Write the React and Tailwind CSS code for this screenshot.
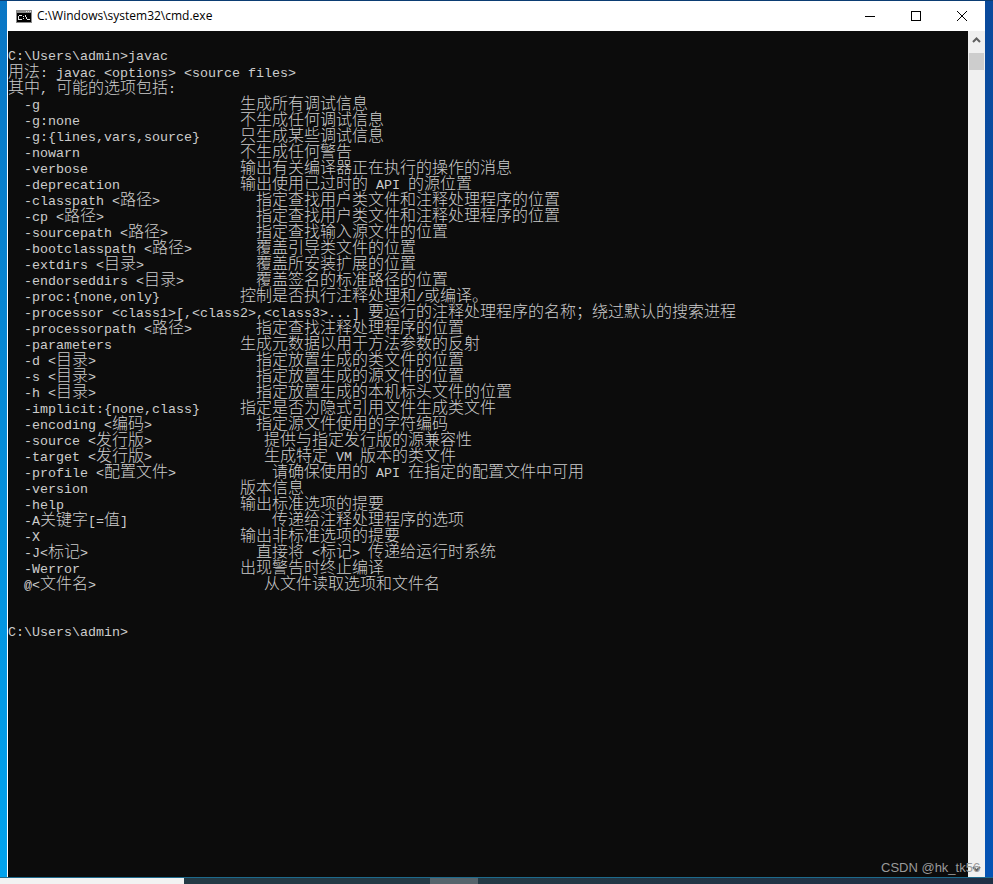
import React from "react";

const rows = [
  ["-g", 29, "生成所有调试信息"],
  ["-g:none", 29, "不生成任何调试信息"],
  ["-g:{lines,vars,source}", 29, "只生成某些调试信息"],
  ["-nowarn", 29, "不生成任何警告"],
  ["-verbose", 29, "输出有关编译器正在执行的操作的消息"],
  ["-deprecation", 29, "输出使用已过时的 API 的源位置"],
  ["-classpath <路径>", 31, "指定查找用户类文件和注释处理程序的位置"],
  ["-cp <路径>", 31, "指定查找用户类文件和注释处理程序的位置"],
  ["-sourcepath <路径>", 31, "指定查找输入源文件的位置"],
  ["-bootclasspath <路径>", 31, "覆盖引导类文件的位置"],
  ["-extdirs <目录>", 31, "覆盖所安装扩展的位置"],
  ["-endorseddirs <目录>", 31, "覆盖签名的标准路径的位置"],
  ["-proc:{none,only}", 29, "控制是否执行注释处理和/或编译。"],
  ["-processor <class1>[,<class2>,<class3>...]", 45, "要运行的注释处理程序的名称；绕过默认的搜索进程"],
  ["-processorpath <路径>", 31, "指定查找注释处理程序的位置"],
  ["-parameters", 29, "生成元数据以用于方法参数的反射"],
  ["-d <目录>", 31, "指定放置生成的类文件的位置"],
  ["-s <目录>", 31, "指定放置生成的源文件的位置"],
  ["-h <目录>", 31, "指定放置生成的本机标头文件的位置"],
  ["-implicit:{none,class}", 29, "指定是否为隐式引用文件生成类文件"],
  ["-encoding <编码>", 31, "指定源文件使用的字符编码"],
  ["-source <发行版>", 32, "提供与指定发行版的源兼容性"],
  ["-target <发行版>", 32, "生成特定 VM 版本的类文件"],
  ["-profile <配置文件>", 33, "请确保使用的 API 在指定的配置文件中可用"],
  ["-version", 29, "版本信息"],
  ["-help", 29, "输出标准选项的提要"],
  ["-A关键字[=值]", 33, "传递给注释处理程序的选项"],
  ["-X", 29, "输出非标准选项的提要"],
  ["-J<标记>", 31, "直接将 <标记> 传递给运行时系统"],
  ["-Werror", 29, "出现警告时终止编译"],
  ["@<文件名>", 32, "从文件读取选项和文件名"],
];

const isWide = (s) => /[^\x00-\x7f]/.test(s);
const cols = (s) => [...s].reduce((n, c) => n + (isWide(c) ? 2 : 1), 0);

function Line({ text = "" }) {
  const parts = text.split(/([^\x00-\x7f]+)/).filter(Boolean);
  return (
    <div className="h-4 leading-4 whitespace-pre">
      {parts.map((p, i) =>
        isWide(p) ? (
          <span key={i} className="text-[16px] leading-4 font-['Noto_Sans_CJK_SC',sans-serif] font-light">
            {p}
          </span>
        ) : (
          <span key={i} className="text-[13.333px] leading-4 font-['Liberation_Mono',monospace]">
            {p}
          </span>
        )
      )}
    </div>
  );
}

const CmdIcon = () => (
  <svg width="16" height="13" viewBox="0 0 16 13" shapeRendering="crispEdges">
    <rect width="16" height="13" fill="#8a8a8a" />
    <rect x="1" y="3" width="14" height="9" fill="#000" />
    <rect x="10" y="1" width="1" height="1" fill="#ddd" />
    <rect x="12" y="1" width="1" height="1" fill="#ddd" />
    <rect x="14" y="1" width="1" height="1" fill="#ddd" />
    <path d="M3 5h3v1H3v3h3v1H2V6h1zM7 6h1v1H7zM7 8h1v1H7zM9 5h1v2h1v2h1v1h-1V9h-1V7H9z" fill="#e6e6e6" />
    <rect x="12" y="9" width="2" height="1" fill="#e6e6e6" />
  </svg>
);

export default function App() {
  return (
    <div className="w-[993px] h-[884px] relative overflow-hidden flex flex-col bg-[#0b3d73]">
      <div className="flex-1 min-h-0 flex pt-px">
        <div className="w-[7px] bg-linear-to-b from-[#0a76c4] to-[#01a3ee]" />
        <div className="flex-1 min-w-0 flex flex-col bg-white pl-px">
          <div className="h-[30px] shrink-0 flex items-center bg-white">
            <div className="ml-2 flex">
              <CmdIcon />
            </div>
            <span className="ml-[5px] text-[12px] text-black font-['Open_Sans',sans-serif]">C:\Windows\system32\cmd.exe</span>
            <div className="ml-auto flex h-full">
              <div className="w-[46px] flex items-center justify-center">
                <div className="w-2.5 h-px bg-black" />
              </div>
              <div className="w-[46px] flex items-center justify-center">
                <div className="w-2.5 h-2.5 border border-black" />
              </div>
              <div className="w-[46px] flex items-center justify-center">
                <svg width="10" height="10" viewBox="0 0 10 10" stroke="#000" strokeWidth="1" fill="none">
                  <path d="M0 0 10 10M10 0 0 10" />
                </svg>
              </div>
            </div>
          </div>
          <div className="flex-1 min-h-0 flex">
            <div className="flex-1 min-w-0 bg-[#0c0c0c] text-[#cccccc] pt-[15px]">
              <Line text="C:\Users\admin>javac" />
              <Line text="用法: javac <options> <source files>" />
              <Line text="其中, 可能的选项包括:" />
              {rows.map(([opt, col, desc]) => (
                <Line key={opt} text={"  " + opt + " ".repeat(Math.max(0, col - 2 - cols(opt))) + desc} />
              ))}
              <Line />
              <Line />
              <Line text="C:\Users\admin>" />
            </div>
            <div className="w-[17px] bg-[#f0f0f0] flex flex-col items-center">
              <div className="h-[17px] w-full flex items-center justify-center">
                <svg width="9" height="6" viewBox="0 0 9 6" fill="none" stroke="#606060" strokeWidth="2">
                  <path d="M1 5 4.5 1.5 8 5" />
                </svg>
              </div>
              <div className="mt-[5px] h-[17px] w-[15px] bg-[#cdcdcd]" />
              <div className="mt-auto h-[17px] w-full flex items-center justify-center">
                <svg width="9" height="6" viewBox="0 0 9 6" fill="none" stroke="#606060" strokeWidth="2">
                  <path d="M1 1 4.5 4.5 8 1" />
                </svg>
              </div>
            </div>
          </div>
        </div>
        <div className="w-2 bg-linear-to-b from-[#0a4a9c] to-[#0453b4]" />
      </div>
      <div className="h-[7px] shrink-0 flex border-t border-[#1d6a8c]">
        <div className="w-[184px] bg-[#f2f2f2]" />
        <div className="w-[246px] bg-[#243a45]" />
        <div className="w-[48px] bg-[#56646c]" />
        <div className="flex-1 bg-linear-to-r from-[#243a45] to-[#1f2f45]" />
      </div>
      <div className="absolute left-[881px] top-[860px] text-[13px] leading-4 text-[#9a9a9a] font-['Liberation_Sans',sans-serif] whitespace-pre">CSDN @hk_tk56</div>
    </div>
  );
}
